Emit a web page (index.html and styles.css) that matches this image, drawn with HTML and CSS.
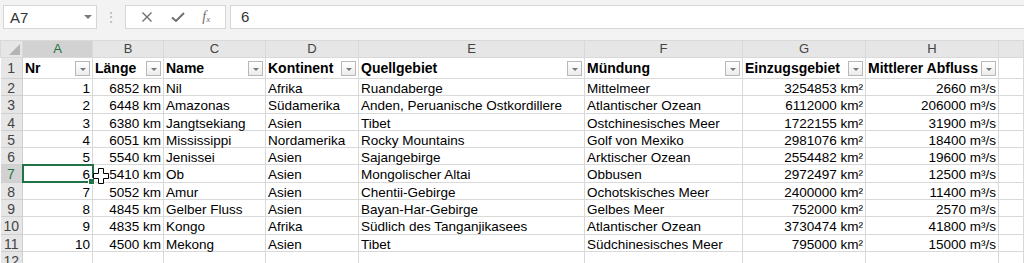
FILE: index.html
```html
<!DOCTYPE html>
<html lang="de">
<head>
  <meta charset="UTF-8">
  <title>Flüsse</title>
  <link rel="stylesheet" href="styles.css">
</head>
<body>
  <div id="formel-leiste">
    <div class="namensfeld">
      <span>A7</span>
      <span class="pfeil"></span>
    </div>
    <div class="trenner">&#8942;</div>
    <div class="funktionen">
      <svg width="12" height="12" viewBox="0 0 12 12"><path d="M1.5 1.5 L10.5 10.5 M10.5 1.5 L1.5 10.5" stroke="#6f6f6f" stroke-width="1.4" fill="none"/></svg>
      <svg width="14" height="12" viewBox="0 0 14 12"><path d="M1 6.5 L5 10 L13 2" stroke="#6f6f6f" stroke-width="2" fill="none"/></svg>
      <span class="fx">f<sub>x</sub></span>
    </div>
    <div class="eingabe">6</div>
  </div>

  <table id="tabelle">
    <colgroup>
      <col style="width:22px"><col style="width:70px"><col style="width:71px"><col style="width:102px"><col style="width:93px"><col style="width:226px"><col style="width:158px"><col style="width:123px"><col style="width:133px"><col>
    </colgroup>
    <thead>
      <tr class="kopf">
        <th class="ecke"><span class="dreieck"></span></th>
        <th class="aktiv">A</th><th>B</th><th>C</th><th>D</th><th>E</th><th>F</th><th>G</th><th>H</th><th></th>
      </tr>
    </thead>
    <tbody id="daten">
      <tr class="titel">
        <th>1</th>
        <td><div class="filter"><span>Nr</span><i></i></div></td>
        <td><div class="filter"><span>Länge</span><i></i></div></td>
        <td><div class="filter"><span>Name</span><i></i></div></td>
        <td><div class="filter"><span>Kontinent</span><i></i></div></td>
        <td><div class="filter"><span>Quellgebiet</span><i></i></div></td>
        <td><div class="filter"><span>Mündung</span><i></i></div></td>
        <td><div class="filter"><span>Einzugsgebiet</span><i></i></div></td>
        <td><div class="filter"><span>Mittlerer Abfluss</span><i></i></div></td>
        <td></td>
      </tr>
    </tbody>
  </table>

  <svg class="zeiger" width="16" height="16" viewBox="0 0 16 16"><path d="M5.5 0.5 H10.5 V5.5 H15.5 V10.5 H10.5 V15.5 H5.5 V10.5 H0.5 V5.5 H5.5 Z" fill="#fff" stroke="#000" stroke-width="1"/></svg>

  <script src="tabelle.js"></script>
</body>
</html>
```

FILE: styles.css
```css
body {
  margin: 0;
  padding: 0;
  width: 1024px;
  height: 263px;
  overflow: hidden;
  background-color: #ffffff;
  font-family: 'Liberation Sans', Arial, sans-serif;
  color: #000;
  position: relative;
}

#formel-leiste {
  display: flex;
  align-items: center;
  height: 40px;
  padding: 0 0 6px 3px;
  background-color: #f3f3f3;
  box-sizing: border-box;
}

.namensfeld {
  display: flex;
  align-items: center;
  justify-content: space-between;
  width: 94px;
  height: 24px;
  box-sizing: border-box;
  padding: 0 4px 0 6px;
  background-color: #fff;
  border: 1px solid #d6d6d6;
  font-size: 15px;
  color: #333;
}

.pfeil {
  width: 0;
  height: 0;
  border-left: 4px solid transparent;
  border-right: 4px solid transparent;
  border-top: 4px solid #7a7a7a;
}

.trenner {
  width: 28px;
  text-align: center;
  color: #b5b5b5;
  font-size: 14px;
}

.funktionen {
  display: flex;
  align-items: center;
  justify-content: space-around;
  width: 101px;
  height: 24px;
  box-sizing: border-box;
  background-color: #fff;
  border: 1px solid #d6d6d6;
  padding: 0 6px;
}

.fx {
  font-family: 'Liberation Serif', serif;
  font-style: italic;
  font-size: 14px;
  color: #6f6f6f;
}

.fx sub {
  font-size: 9px;
  vertical-align: -1px;
}

.eingabe {
  flex: 1;
  height: 24px;
  box-sizing: border-box;
  margin-left: 4px;
  padding-left: 10px;
  background-color: #fff;
  border: 1px solid #d6d6d6;
  border-right: none;
  font-size: 15px;
  line-height: 22px;
  color: #333;
}

#tabelle {
  table-layout: fixed;
  border-collapse: collapse;
  width: 1024px;
  font-size: 13.5px;
}

#tabelle th,
#tabelle td {
  border: 1px solid #d9d9d9;
  padding: 3px 2px 0;
  white-space: nowrap;
  line-height: 13.3px;
}

.kopf th {
  background-color: #e6e6e6;
  color: #444;
  font-weight: normal;
  font-size: 13px;
  border-color: #cfcfcf;
  border-top: none;
}

#tabelle .kopf th {
  padding: 0 2px;
  height: 16px;
  line-height: 16px;
}

.kopf th.aktiv {
  background-color: #d2d2d2;
  color: #217346;
  border-bottom: 2px solid #217346;
}

.kopf th.ecke {
  position: relative;
  border-left: none;
}

.dreieck {
  position: absolute;
  right: 2px;
  bottom: 2px;
  width: 0;
  height: 0;
  border-left: 11px solid transparent;
  border-bottom: 11px solid #b4b4b4;
}

#daten th {
  background-color: #e6e6e6;
  color: #444;
  font-weight: normal;
  font-size: 14px;
  text-align: center;
  border-color: #cfcfcf;
  border-left: none;
  padding-left: 0;
  padding-right: 0;
}

#daten th.aktiv {
  background-color: #d2d2d2;
  color: #217346;
  border-right: 2px solid #217346;
}

#tabelle .titel td,
#tabelle .titel th {
  padding-top: 0;
  height: 20px;
  line-height: 20px;
}

.filter {
  display: flex;
  align-items: center;
  justify-content: space-between;
  font-weight: bold;
  font-size: 14px;
}

.filter i {
  flex: none;
  width: 13px;
  height: 13px;
  border: 1px solid #b8b8b8;
  background: linear-gradient(#ffffff, #ececec);
  position: relative;
  margin-left: 1px;
}

.filter i::after {
  content: "";
  position: absolute;
  left: 4px;
  top: 6px;
  border-left: 3px solid transparent;
  border-right: 3px solid transparent;
  border-top: 3px solid #777;
}

.zahl {
  text-align: right;
}

#tabelle td.auswahl {
  outline: 2px solid #217346;
  outline-offset: -1px;
  position: relative;
}

.griff {
  position: absolute;
  right: -3px;
  bottom: -3px;
  width: 5px;
  height: 5px;
  background-color: #217346;
  border: 1px solid #fff;
}

.zeiger {
  position: absolute;
  left: 93px;
  top: 168px;
}
```

FILE: tabelle.js
```js
var fluesse = [
  [1, 6852, 'Nil', 'Afrika', 'Ruandaberge', 'Mittelmeer', 3254853, 2660],
  [2, 6448, 'Amazonas', 'Südamerika', 'Anden, Peruanische Ostkordillere', 'Atlantischer Ozean', 6112000, 206000],
  [3, 6380, 'Jangtsekiang', 'Asien', 'Tibet', 'Ostchinesisches Meer', 1722155, 31900],
  [4, 6051, 'Mississippi', 'Nordamerika', 'Rocky Mountains', 'Golf von Mexiko', 2981076, 18400],
  [5, 5540, 'Jenissei', 'Asien', 'Sajangebirge', 'Arktischer Ozean', 2554482, 19600],
  [6, 5410, 'Ob', 'Asien', 'Mongolischer Altai', 'Obbusen', 2972497, 12500],
  [7, 5052, 'Amur', 'Asien', 'Chentii-Gebirge', 'Ochotskisches Meer', 2400000, 11400],
  [8, 4845, 'Gelber Fluss', 'Asien', 'Bayan-Har-Gebirge', 'Gelbes Meer', 752000, 2570],
  [9, 4835, 'Kongo', 'Afrika', 'Südlich des Tanganjikasees', 'Atlantischer Ozean', 3730474, 41800],
  [10, 4500, 'Mekong', 'Asien', 'Tibet', 'Südchinesisches Meer', 795000, 15000]
];

var tbody = document.getElementById('daten');

fluesse.forEach(function (f, i) {
  var zeile = i + 2;
  var aktiv = zeile === 7;
  var html = '<th' + (aktiv ? ' class="aktiv"' : '') + '>' + zeile + '</th>';
  html += '<td class="zahl' + (aktiv ? ' auswahl' : '') + '">' + f[0] + (aktiv ? '<span class="griff"></span>' : '') + '</td>';
  html += '<td class="zahl">' + f[1] + ' km</td>';
  html += '<td>' + f[2] + '</td>';
  html += '<td>' + f[3] + '</td>';
  html += '<td>' + f[4] + '</td>';
  html += '<td>' + f[5] + '</td>';
  html += '<td class="zahl">' + f[6] + ' km²</td>';
  html += '<td class="zahl">' + f[7] + ' m³/s</td>';
  html += '<td></td>';
  var tr = document.createElement('tr');
  tr.innerHTML = html;
  tbody.appendChild(tr);
});

var leer = document.createElement('tr');
leer.innerHTML = '<th>12</th><td></td><td></td><td></td><td></td><td></td><td></td><td></td><td></td><td></td>';
tbody.appendChild(leer);
```
